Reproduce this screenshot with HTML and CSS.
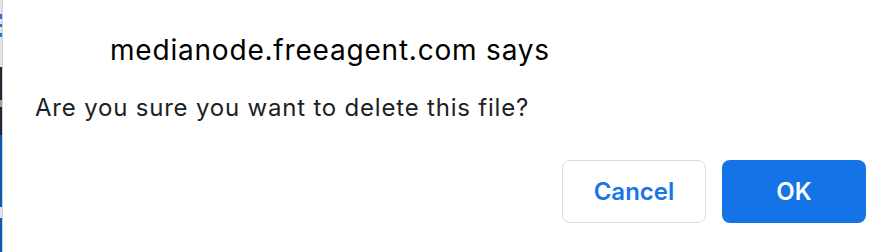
FILE: index.html
```html
<!DOCTYPE html>
<html lang="en">

<head>
    <meta charset="utf-8">
    <title>confirm</title>
    <link rel="stylesheet" href="styles.css">
</head>

<body>
    <div class="page">
        <!-- sliver of the page behind the dialog -->
        <div class="edge">
            <div class="seg s1"></div>
            <div class="seg s2"></div>
            <div class="seg s3"></div>
            <div class="seg s4"></div>
            <div class="seg s5"></div>
            <div class="seg s6"></div>
            <div class="seg s7"></div>
            <div class="seg s8"></div>
            <div class="seg s9"></div>
            <div class="seg s10"></div>
            <div class="seg s11"></div>
            <div class="seg s12"></div>
            <div class="seg s13"></div>
        </div>
        <div class="dialog">
            <div class="title">medianode.freeagent.com says</div>
            <div class="message">Are you sure you want to delete this file?</div>
            <div class="buttons">
                <button class="btn cancel">Cancel</button>
                <button class="btn ok">OK</button>
            </div>
        </div>
    </div>
</body>

</html>
```
FILE: styles.css
```css
body {
    margin: 0;
    background: #fff;
    font-family: Inter, "Liberation Sans", sans-serif;
}

.page {
    display: flex;
    width: 896px;
    height: 252px;
}

.edge {
    width: 2px;
    border-right: 1px solid #d4d4d4;
}

.seg {
    width: 2px;
    background: #e2e4e8;
}

.s1 { height: 14px; }
.s2 { height: 5px; background: #2f6fd8; }
.s3 { height: 5px; }
.s4 { height: 3px; background: #2f6fd8; }
.s5 { height: 6px; }
.s6 { height: 4px; background: #2f6fd8; }
.s7 { height: 30px; }
.s8 { height: 33px; background: #1e2833; }
.s9 { height: 7px; background: #9aa0a6; }
.s10 { height: 28px; background: #1e2833; }
.s11 { height: 72px; background: #0b5cb3; }
.s12 { height: 11px; }
.s13 { height: 34px; background: #0b5cb3; }

.dialog {
    flex: 1;
    display: flex;
    flex-direction: column;
}

.title {
    padding: 33px 0 0 107px;
    font-size: 28px;
    line-height: 34px;
    letter-spacing: 0.8px;
    color: #000;
}

.message {
    padding: 26px 0 0 32px;
    font-size: 24px;
    line-height: 30px;
    letter-spacing: 0.8px;
    color: #202124;
}

.buttons {
    display: flex;
    justify-content: flex-end;
    gap: 16px;
    padding: 37px 30px 0 0;
}

.btn {
    width: 144px;
    height: 63px;
    border-radius: 8px;
    font-family: inherit;
    font-size: 24px;
    font-weight: 600;
}

.cancel {
    background: #fff;
    color: #1a73e8;
    border: 1px solid #dadce0;
}

.ok {
    background: #1473e6;
    color: #fff;
    border: none;
}
```
